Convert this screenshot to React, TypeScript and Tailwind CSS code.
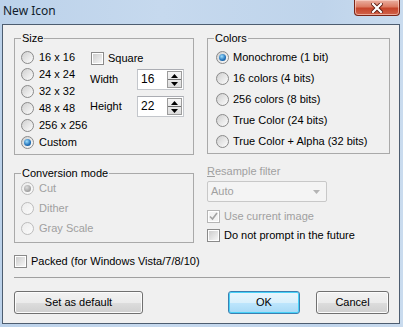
import React from 'react';

const ui = "font-['Liberation_Sans',Tahoma,sans-serif] text-[11px] leading-[13px]";

function Radio({ checked = false, disabled = false }: { checked?: boolean; disabled?: boolean }) {
    return (
        <span
            className={`flex h-[13px] w-[13px] shrink-0 items-center justify-center rounded-full border ${
                disabled
                    ? 'border-[#bcbcbc] bg-[linear-gradient(135deg,#ececec,#fbfbfb)]'
                    : 'border-[#8a8a8a] bg-[linear-gradient(135deg,#cfcfcf,#fdfdfd)]'
            }`}
        >
            {checked && (
                <span
                    className={`h-[7px] w-[7px] rounded-full ${
                        disabled
                            ? 'bg-[radial-gradient(circle_at_40%_35%,#dcdcdc,#9a9a9a_75%)]'
                            : 'bg-[radial-gradient(circle_at_40%_35%,#9fe0ff,#1f6fb8_60%,#12497e)]'
                    }`}
                />
            )}
        </span>
    );
}

function Check({ checked = false, disabled = false }: { checked?: boolean; disabled?: boolean }) {
    return (
        <span
            className={`flex h-[13px] w-[13px] shrink-0 items-center justify-center border bg-white ${
                disabled ? 'border-[#b5b5b5]' : 'border-[#8a8a8a]'
            }`}
        >
            <span
                className={`flex h-[9px] w-[9px] items-center justify-center ${
                    disabled ? 'bg-[#f3f3f3]' : 'bg-[linear-gradient(135deg,#cdcdcd,#f6f6f6)]'
                }`}
            >
                {checked && (
                    <svg width="9" height="9" viewBox="0 0 9 9">
                        <path d="M1 4.5 L3.5 7 L8 1" fill="none" stroke={disabled ? '#a3a3a3' : '#2a4a7a'} strokeWidth="1.6" />
                    </svg>
                )}
            </span>
        </span>
    );
}

function Spin({ value }: { value: string }) {
    return (
        <div className="flex h-[21px] w-[47px] items-center border border-[#c3c6cb] border-t-[#abadb3] bg-white pl-[3px] pr-[1px]">
            <span className="flex-1 text-[12px]">{value}</span>
            <span className="flex h-[17px] w-[15px] flex-col border border-[#9c9c9c] bg-[linear-gradient(#f6f6f6,#dcdcdc)]">
                <span className="flex flex-1 items-center justify-center border-b border-[#6f6f6f]">
                    <svg width="7" height="4" viewBox="0 0 7 4">
                        <path d="M0 4 L3.5 0 L7 4 Z" fill="#000" />
                    </svg>
                </span>
                <span className="flex flex-1 items-center justify-center">
                    <svg width="7" height="4" viewBox="0 0 7 4">
                        <path d="M0 0 L7 0 L3.5 4 Z" fill="#000" />
                    </svg>
                </span>
            </span>
        </div>
    );
}

function Group({ title, disabled = false, className, children }: { title: string; disabled?: boolean; className: string; children: React.ReactNode }) {
    return (
        <div className={`relative border border-[#a9a9a9] ${className}`}>
            <span className={`absolute -top-[7px] left-[6px] bg-[#f0f0f0] px-[1px] ${disabled ? 'text-[#000]' : ''}`}>{title}</span>
            {children}
        </div>
    );
}

function Button({ label, primary = false, className }: { label: string; primary?: boolean; className: string }) {
    return (
        <button
            className={`flex h-[23px] items-center justify-center rounded-[3px] border ${
                primary
                    ? 'border-[#3c7fb1] bg-[linear-gradient(#eaf6fd_0%,#d9f0fc_50%,#bee6fd_51%,#a7d9f5_100%)] shadow-[inset_0_0_0_1px_#48d2f8]'
                    : 'border-[#707070] bg-[linear-gradient(#f2f2f2_0%,#ebebeb_50%,#dddddd_51%,#cfcfcf_100%)] shadow-[inset_0_0_0_1px_#fcfcfc]'
            } ${className}`}
        >
            {label}
        </button>
    );
}

const sizes = ['16 x 16', '24 x 24', '32 x 32', '48 x 48', '256 x 256', 'Custom'];
const colors = ['Monochrome (1 bit)', '16 colors (4 bits)', '256 colors (8 bits)', 'True Color (24 bits)', 'True Color + Alpha (32 bits)'];
const modes = ['Cut', 'Dither', 'Gray Scale'];

export default function App() {
    return (
        <div className={`h-[327px] w-[403px] overflow-hidden bg-[linear-gradient(90deg,#bcd2ea,#c6d9ee_40%,#bfd4eb_80%,#c9dbee)] text-black ${ui}`}>
            {/* title bar */}
            <div className="flex h-[24px] items-start justify-between">
                <span className="ml-[3px] mt-[3px] font-['Noto_Sans',sans-serif] text-[12px] leading-[16px] text-[#101c2c]">New Icon</span>
                <span className="mr-[3px] flex h-[16px] w-[46px] items-center justify-center rounded-b-[4px] border border-t-0 border-[#7a2416] bg-[linear-gradient(#eab0a2_0%,#dc7b63_45%,#c6452b_55%,#d0624a_100%)] shadow-[inset_0_0_0_1px_rgba(255,220,210,0.6)]">
                    <svg width="12" height="10" viewBox="0 0 12 10">
                        <path d="M2 1 L10 9 M10 1 L2 9" stroke="#5a1a10" strokeWidth="4" strokeLinecap="square" />
                        <path d="M2 1 L10 9 M10 1 L2 9" stroke="#fff" strokeWidth="2.2" strokeLinecap="square" />
                    </svg>
                </span>
            </div>

            {/* client area */}
            <div className="ml-[2px] h-[300px] w-[398px] border border-[#4d5d70] bg-[#f0f0f0]">
                <div className="flex gap-[13px] pl-[11px] pt-[13px]">
                    <Group title="Size" className="h-[117px] w-[180px]">
                        <div className="flex">
                            <div className="flex w-[75px] flex-col pl-[6px] pt-[10px]">
                                {sizes.map((s, i) => (
                                    <div key={s} className="flex h-[17px] items-center gap-[5px]">
                                        <Radio checked={i === 5} />
                                        <span>{s}</span>
                                    </div>
                                ))}
                            </div>
                            <div className="flex flex-col pt-[13px]">
                                <div className="ml-[1px] flex h-[13px] items-center gap-[4px]">
                                    <Check />
                                    <span>Square</span>
                                </div>
                                <div className="mt-[4px] flex items-center">
                                    <span className="w-[47px]">Width</span>
                                    <Spin value="16" />
                                </div>
                                <div className="mt-[6px] flex items-center">
                                    <span className="w-[47px]">Height</span>
                                    <Spin value="22" />
                                </div>
                            </div>
                        </div>
                    </Group>

                    <Group title="Colors" className="h-[116px] w-[183px]">
                        <div className="flex flex-col pl-[8px] pt-[8px]">
                            {colors.map((c, i) => (
                                <div key={c} className="flex h-[21px] items-center gap-[4px]">
                                    <Radio checked={i === 0} />
                                    <span>{c}</span>
                                </div>
                            ))}
                        </div>
                    </Group>
                </div>

                <div className="flex gap-[13px] pl-[11px]">
                    <div className="flex w-[180px] flex-col">
                        <Group title="Conversion mode" className="mt-[18px] h-[70px]">
                            <div className="flex flex-col pl-[6px] pt-[4px] text-[#a0a0a0]">
                                {modes.map((m, i) => (
                                    <div key={m} className="flex h-[20px] items-center gap-[5px]">
                                        <Radio checked={i === 0} disabled />
                                        <span>{m}</span>
                                    </div>
                                ))}
                            </div>
                        </Group>
                        <div className="mt-[12px] flex h-[13px] items-center gap-[4px]">
                            <Check />
                            <span className="whitespace-nowrap">Packed (for Windows Vista/7/8/10)</span>
                        </div>
                    </div>

                    <div className="flex w-[183px] flex-col">
                        <span className="mt-[10px] text-[#a0a0a0]">
                            <span className="underline">R</span>esample filter
                        </span>
                        <div className="mt-[3px] flex h-[21px] w-[120px] items-center justify-between rounded-[2px] border border-[#c8c8c8] bg-[#f4f4f4] pl-[3px] pr-[6px] text-[#a0a0a0]">
                            <span>Auto</span>
                            <svg width="7" height="4" viewBox="0 0 7 4">
                                <path d="M0 0 L7 0 L3.5 4 Z" fill="#b4b4b4" />
                            </svg>
                        </div>
                        <div className="mt-[8px] flex h-[13px] items-center gap-[4px] text-[#a0a0a0]">
                            <Check checked disabled />
                            <span>Use current image</span>
                        </div>
                        <div className="mt-[6px] flex h-[13px] items-center gap-[4px]">
                            <Check />
                            <span>Do not prompt in the future</span>
                        </div>
                    </div>
                </div>

                <div className="ml-[11px] mt-[9px] w-[376px] border-t border-[#a0a0a0]" />

                <div className="ml-[11px] mt-[13px] flex w-[375px]">
                    <Button label="Set as default" className="w-[129px]" />
                    <Button label="OK" primary className="ml-auto w-[72px]" />
                    <Button label="Cancel" className="ml-[16px] w-[73px]" />
                </div>
            </div>
        </div>
    );
}
